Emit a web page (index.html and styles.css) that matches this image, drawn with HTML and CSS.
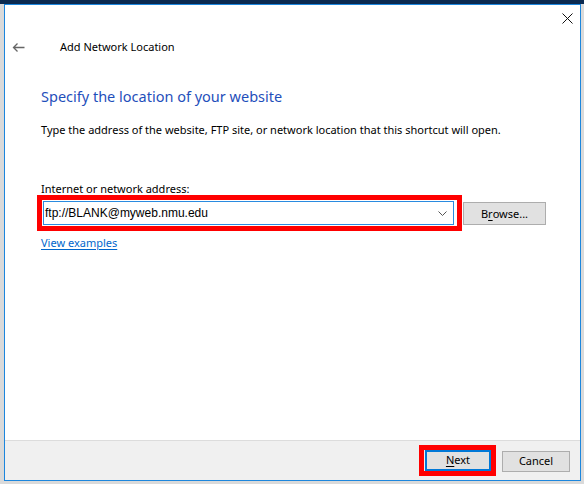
FILE: index.html
```html
<!DOCTYPE html>
<html>
<head>
<meta charset="utf-8">
<link rel="stylesheet" href="styles.css">
</head>
<body>
<div class="dialog">
  <div class="titlebar">
    <div class="close">
      <svg width="11" height="11" viewBox="0 0 11 11"><path d="M0.5 0.5 L10.5 10.5 M10.5 0.5 L0.5 10.5" stroke="#111" stroke-width="1" fill="none"/></svg>
    </div>
  </div>
  <div class="header">
    <svg class="back" width="13" height="11" viewBox="0 0 13 11"><path d="M12.5 5.5 H1.5 M5.5 1.5 L1.5 5.5 L5.5 9.5" stroke="#666" stroke-width="1.3" fill="none"/></svg>
    <span class="title">Add Network Location</span>
  </div>
  <div class="main">
    <div class="heading">Specify the location of your website</div>
    <div class="desc">Type the address of the website, FTP site, or network location that this shortcut will open.</div>
    <div class="label">Internet or network address:</div>
    <div class="row">
      <div class="highlight">
        <div class="combo">
          <span class="value">ftp://BLANK@myweb.nmu.edu</span>
          <svg class="chev" width="9" height="5" viewBox="0 0 9 5"><path d="M0.5 0.5 L4.5 4.5 L8.5 0.5" stroke="#555" stroke-width="1" fill="none"/></svg>
        </div>
      </div>
      <div class="btn browse">B<u>r</u>owse...</div>
    </div>
    <div class="link">View examples</div>
  </div>
  <div class="footer">
    <div class="highlight2">
      <div class="btn next"><u>N</u>ext</div>
    </div>
    <div class="btn cancel">Cancel</div>
  </div>
</div>
</body>
</html>
```

FILE: styles.css
```css
html, body {
  margin: 0;
  padding: 0;
}
body {
  width: 584px;
  height: 484px;
  overflow: hidden;
  background: linear-gradient(#0b2a50 0, #0b2a50 4px, #dadada 4px);
  font-family: "Noto Sans", "Open Sans", sans-serif;
  font-size: 11px;
  color: #000;
}
.dialog {
  margin: 4px 0 0 4px;
  width: 575px;
  height: 475px;
  border: 1px solid #1c86dd;
  background: #fff;
  display: flex;
  flex-direction: column;
}
.titlebar {
  height: 26px;
  display: flex;
  justify-content: flex-end;
}
.close {
  width: 26px;
  height: 26px;
  display: flex;
  align-items: center;
  justify-content: center;
}
.header {
  height: 32px;
  display: flex;
  align-items: center;
}
.back {
  margin-left: 7px;
}
.title {
  margin-left: 35px;
  line-height: 16px;
  font-size: 11px;
}
.main {
  flex: 1;
  padding-left: 36px;
}
.heading {
  margin-top: 23px;
  font-size: 14.5px;
  line-height: 20px;
  color: #1f4fbb;
}
.desc {
  margin-top: 16px;
  line-height: 16px;
}
.label {
  margin-top: 44px;
  line-height: 14px;
}
.row {
  margin-top: -1px;
  margin-left: -4px;
  display: flex;
  align-items: flex-start;
}
.highlight {
  border: 5px solid #f00;
  width: 415px;
  height: 26px;
}
.combo {
  margin: 1px 0 0 1px;
  width: 409px;
  height: 22px;
  border: 1px solid #2a8be0;
  display: flex;
  align-items: center;
}
.value {
  padding-left: 1px;
  line-height: 20px;
  padding-bottom: 1px;
  flex: 1;
  font-family: "Liberation Sans", Arial, sans-serif;
  font-size: 12px;
}
.chev {
  margin-right: 6px;
}
.btn {
  box-sizing: border-box;
  background: #e1e1e1;
  border: 1px solid #adadad;
  display: flex;
  align-items: center;
  justify-content: center;
  line-height: 16px;
}
.btn u {
  text-decoration-thickness: 1px;
  text-underline-offset: 2px;
}
.browse {
  margin-top: 7px;
  margin-left: 1px;
  width: 83px;
  height: 23px;
}
.link {
  margin-top: 4px;
  line-height: 16px;
  color: #0066cc;
  text-decoration: underline;
  text-underline-offset: 2px;
  display: inline-block;
}
.footer {
  height: 39px;
  border-top: 1px solid #dcdcdc;
  background: #f0f0f0;
  display: flex;
  align-items: center;
  justify-content: flex-end;
  padding-right: 10px;
}
.highlight2 {
  border: 5px solid #f00;
  width: 67px;
  height: 21px;
  display: flex;
  margin-top: -1px;
}
.next {
  margin-left: 1px;
  width: 66px;
  height: 21px;
  border: 1px solid #0078d7;
  box-shadow: inset 0 0 0 1px #0078d7;
}
.cancel {
  margin-left: 6px;
  width: 68px;
  height: 21px;
  margin-top: 1px;
}
```
